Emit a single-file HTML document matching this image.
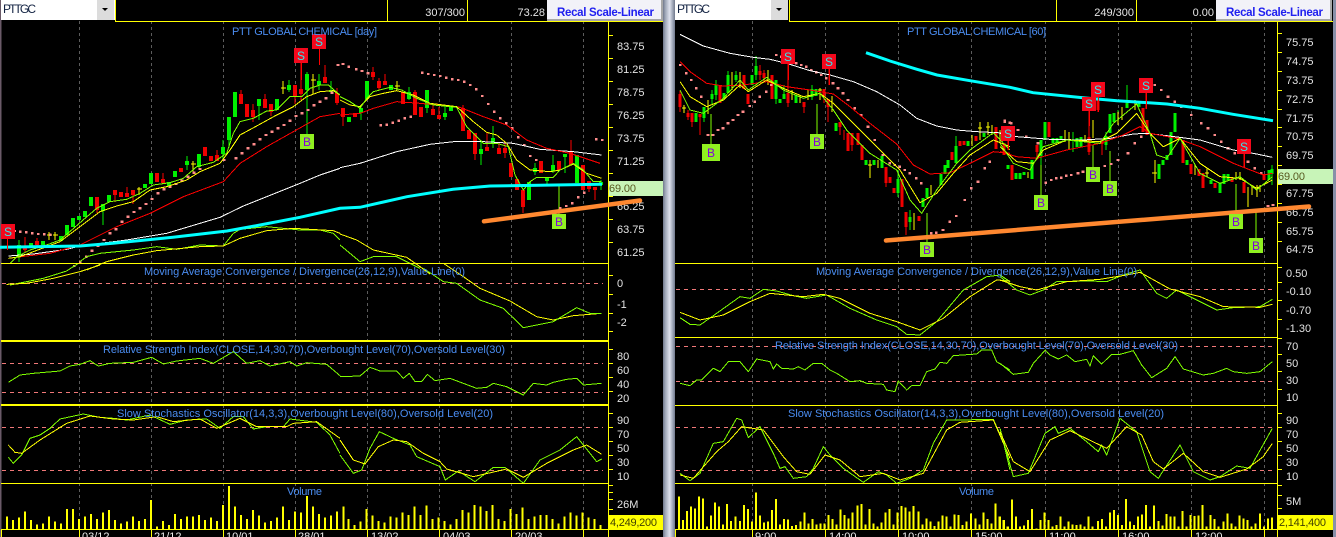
<!DOCTYPE html>
<html><head><meta charset="utf-8"><title>PTTGC</title>
<style>
html,body{margin:0;padding:0;background:#000;width:1336px;height:537px;overflow:hidden}
svg{display:block}
text{font-family:"Liberation Sans",Arial,sans-serif;font-size:11px}
.ax{fill:#e4e4e4}
.ti{fill:#4a8cf0}
.dt{fill:#eeeeee}
.l{fill:none;stroke-width:3;stroke-linejoin:round}
.g{stroke:#80ff00}.y{stroke:#ffff00}.r{stroke:#ff0000}.w{stroke:#ffffff}
</style></head><body>
<svg xmlns="http://www.w3.org/2000/svg" width="1336" height="537" viewBox="0 0 1336 537">
<defs>
<linearGradient id="sb" x1="0" x2="1" y1="0" y2="0"><stop offset="0" stop-color="#70788c"/><stop offset=".2" stop-color="#a0a8b8"/><stop offset=".55" stop-color="#dfe2ee"/><stop offset=".8" stop-color="#a0a8b8"/><stop offset="1" stop-color="#70788c"/></linearGradient>
</defs>
<rect width="1336" height="537" fill="#000"/>
<rect x="0" y="0" width="1.5" height="537" fill="#6a5a68"/>
<rect x="663" y="0" width="12" height="537" fill="url(#sb)"/>
<rect x="1333" y="0" width="3" height="537" fill="#8890a8"/>

<!-- grid -->
<path d="M79.5 21V529M151.5 21V529M223.5 21V529M295.5 21V529M367.5 21V529M439.5 21V529M511.5 21V529M583.5 21V529M752.5 21V529M825.5 21V529M898.5 21V529M971.5 21V529M1045.5 21V529M1118.5 21V529M1191.5 21V529M1264.5 21V529" stroke="#5c5c5c" stroke-dasharray="3 3" fill="none"/>
<path d="M2 283.5H603M2 363.5H603M2 392.5H603M2 427.5H603M2 470.5H603M676 289.5H1273M676 346.5H1273M676 381.5H1273M676 427.5H1273M676 470.5H1273" stroke="#f07878" stroke-dasharray="4 4" fill="none"/>

<!-- candles left -->
<g shape-rendering="crispEdges" fill="none">
<path stroke="#00f000" d="M19 240V262M103 204V225M187 156V170M199 154V170M223 140V160M229 140V148M259 99V120M289 80V92M307 72V134M319 74V90M331 81V93M361 113V120M409 87V100M427 108V113M445 105V120M481 140V165M493 126V148M535 163V175M553 155V173M565 157V173M601 180V190M547 181V185"/>
<path stroke="#80ff00" d="M559 185V214"/>
<path stroke="#ff0000" d="M25 237V252M37 238V247M97 210V213M115 195V202M127 187V193M133 195V204M163 173V183M217 150V155M241 90V94M253 104V122M265 94V99M271 112V116M301 63V100M295 96V104M325 65V83M337 88V105M343 117V126M373 67V80M379 78V90M385 74V81M415 90V92M433 105V109M439 107V115M463 105V108M475 154V160M487 133V147M499 142V148M505 142V158M523 207V213M571 140V152M589 189V192M595 190V200"/>
<path stroke="#ffff00" d="M49 232V240M47 235H52M55 232V240M53 235H58M139 187V195M137 189H142M193 161V173M191 164H196M283 81V94M281 88H286M313 74V94M311 80H316M397 81V90M395 86H400"/>
<path stroke="#00f000" stroke-width="4" d="M19 245V257M31 243V247M43 241V245M61 236V241M67 225V235M73 218V227M79 216V220M85 211V217M91 197V206M103 204V211M109 195V202M145 184V188M151 173V184M169 182V186M175 171V177M187 161V165M199 154V167M223 147V154M229 117V140M235 92V117M259 99V106M277 99V110M289 85V90M307 74V90M319 81V85M331 90V92M349 117V122M361 108V113M367 81V99M391 85V90M409 92V99M427 90V108M445 113V117M451 107V111M481 149V154M493 138V143M529 182V200M535 168V172M547 177V181M553 165V171M565 154V157M577 155V183M601 182V185"/>
<path stroke="#f00000" stroke-width="4" d="M25 247V250M37 241V245M97 197V210M115 190V195M121 192V197M127 193V197M133 190V195M157 173V182M163 179V183M181 168V172M205 147V156M211 156V161M217 155V161M241 94V104M247 104V117M253 110V117M265 99V108M271 104V112M295 85V96M301 89V94M325 77V83M337 93V103M343 108V117M355 113V117M373 72V77M379 81V88M385 81V85M403 92V104M415 92V115M421 107V117M433 109V115M439 115V119M463 108V131M469 130V139M475 133V154M487 147V151M499 148V154M505 148V153M511 163V177M517 179V190M523 190V207M541 161V173M559 161V170M571 152V165M583 165V190M589 181V189M595 187V190"/>
</g>

<!-- candles right -->
<g shape-rendering="crispEdges" fill="none">
<path stroke="#00f000" d="M704 107V122M712 90V105M716 80V100M728 71V93M736 71V82M756 56V80M776 80V104M784 85V99M812 85V100M898 170V197M910 210V230M956 136V163M1127 85V108M1272 165V185M1041 140V165M1073 132V152M1106 132V150M1118 110V125"/>
<path stroke="#80ff00" d="M711 114V144M817 104V134M927 213V242M1093 145V167M1110 151V181M1041 165V195M1236 184V214M1256 212V238"/>
<path stroke="#ff0000" d="M680 91V112M688 110V120M692 122V127M700 117V135M760 65V80M764 70V82M788 64V107M804 107V113M824 97V103M829 69V85M828 107V122M840 127V135M844 130V140M852 145V151M886 183V187M906 227V235M1008 141V150M1089 111V155M1098 97V112M1102 144V155M1146 93V109M1244 154V168M1037 152V160"/>
<path stroke="#ffff00" d="M684 105V113M682 108H686M708 100V114M732 72V90M740 72V88M768 70V85M792 90V100M800 95V103M808 90V100M820 88V100M818 90H822M832 96V112M870 160V178M868 165H872M878 160V168M914 213V230M931 185V195M972 135V146M980 122V140M978 128H982M988 122V135M986 127H990M992 125V135M1000 130V142M1028 172V178M1065 130V142M1069 132V150M1085 135V142M1093 120V138M1118 112V125M1122 107V120M1135 100V110M1155 160V183M1152 173H1157M1195 165V175M1207 168V177M1205 173H1209M1236 172V180M1240 172V180M1248 187V207M1252 185V195M1257 185V197M1260 185V192"/>
<path stroke="#00f000" stroke-width="3" d="M696 113V122M704 107V118M712 94V99M716 85V95M724 93V99M728 75V93M736 75V80M752 75V85M756 66V75M776 80V99M780 99V103M784 94V99M796 95V103M812 89V97M816 89V96M836 123V131M866 160V165M874 160V165M882 156V168M898 179V193M910 217V222M923 198V207M927 188V198M941 174V185M945 165V174M948 160V168M956 146V163M968 141V146M984 133V137M1008 165V169M1016 173V179M1020 173V179M1024 172V175M1032 160V179M1041 140V156M1045 122V140M1053 138V143M1057 138V143M1061 136V140M1077 138V147M1081 137V147M1106 136V145M1110 114V133M1114 113V122M1127 103V108M1139 103V107M1159 164V179M1163 160V165M1167 155V160M1171 132V155M1175 113V132M1187 160V165M1211 180V184M1220 183V193M1224 174V184M1228 174V180M1269 170V180M1272 169V174"/>
<path stroke="#f00000" stroke-width="3" d="M680 94V107M688 113V117M692 113V122M700 114V117M720 85V103M744 75V89M748 94V104M760 71V75M764 73V78M772 75V99M788 93V103M804 102V107M824 89V97M828 99V107M840 122V127M848 133V151M852 133V145M858 133V145M862 145V160M886 167V183M890 177V183M894 188V193M902 179V207M906 212V227M919 216V221M952 152V160M960 141V146M964 141V145M976 136V141M996 127V149M1004 143V155M1012 165V180M1037 145V152M1049 122V137M1089 137V152M1098 98V110M1102 140V144M1143 108V132M1147 120V135M1179 137V140M1183 140V163M1191 164V174M1199 169V176M1203 173V188M1215 183V188M1232 177V182M1244 182V193M1264 174V180"/>
</g>

<!-- SAR dots -->
<g fill="none" stroke="#ff8c8c" shape-rendering="crispEdges" transform="scale(.33333)" >
<path stroke-width="7" d="M40 693h8M57 695h8M75 697h8M93 700h8M111 702h8M129 703h8M147 704h8M219 798h8M237 785h8M255 770h8M272 752h8M290 738h8M308 720h8M326 700h8M344 688h8M362 665h8M380 650h8M398 636h8M416 625h8M434 612h8M452 597h8M470 580h8M488 568h8M506 560h8M524 552h8M542 542h8M560 530h8M578 518h8M596 507h8M668 480h8M704 475h8M722 460h8M740 445h8M758 433h8M776 418h8M794 405h8M812 395h8M830 385h8M848 375h8M866 362h8M884 348h8M902 340h8M920 330h8M938 316h8M956 305h8M974 295h8M992 278h8M1010 195h8"/>
<path stroke-width="7" transform="translate(1020,0)" d="M5 192h8M22 200h8M45 208h8M62 213h8M80 220h8M118 376h8M136 374h8M154 368h8M172 362h8M190 355h8M208 350h8M243 218h8M261 222h8M279 225h8M297 228h8M315 233h8M333 238h8M351 240h8M369 245h8M387 255h8M405 268h8M423 288h8M441 312h8M459 335h8M477 355h8M495 370h8M513 385h8M531 412h8M549 435h8M567 468h8M585 480h8M657 625h8M675 618h8M693 610h8M711 592h8M729 578h8M765 418h8M783 420h8"/>
<path stroke-width="7" transform="translate(2010,0)" d="M27 195h8M45 220h8M60 240h8M75 265h8M90 290h8M110 405h8M125 405h8M140 390h8M155 385h8M170 370h8M185 360h8M200 345h8M215 335h8M235 318h8M250 305h8M265 290h8M285 275h8M300 255h8M315 165h8M330 170h8M345 175h8M375 190h8M390 195h8M405 200h8M420 210h8M435 217h8M450 225h8M465 235h8M485 250h8M500 265h8M515 280h8M530 300h8M550 325h8M570 345h8M590 380h8M610 420h8M635 465h8M655 490h8M670 495h8M685 500h8M700 510h8M715 520h8M735 535h8M750 550h8M780 700h8M795 698h8M815 690h8M835 665h8M855 648h8M880 600h8M900 565h8M920 545h8M940 505h8M955 485h8M1000 365h8M1015 368h8"/>
<path stroke-width="7" transform="translate(3000,0)" d="M10 362h8M30 370h8M50 390h8M75 410h8M110 430h8M133 548h8M150 540h8M165 535h8M180 533h8M195 527h8M210 525h8M230 520h8M245 515h8M290 505h8M310 498h8M330 492h8M350 480h8M380 460h8M400 430h8M420 410h8M460 255h8M480 270h8M500 290h8M520 305h8M540 320h8M570 345h8M600 370h8M620 385h8M640 405h8M660 425h8M680 445h8M700 460h8M740 485h8M760 505h8M780 520h8M800 618h8M815 615h8"/>
</g>

<!-- MA lines -->
<g transform="scale(.33333)" shape-rendering="crispEdges">
<polyline class="l w" points="25,768 100,762 200,748 240,738 380,720 500,700 660,652 730,618 800,590 900,550 960,525 1020,505"/>
<polyline class="l r" points="25,775 80,768 150,760 240,735 350,680 450,640 550,590 670,545 720,490 800,440 880,395 960,350 1020,340"/>
<polyline class="l y" points="25,775 60,770 100,755 180,725 240,680 300,635 350,618 400,605 450,570 500,560 560,540 600,515 660,490 690,450 720,405 770,378 830,345 880,320 920,290 960,275 1000,272 1020,285"/>
<polyline class="l g" points="30,790 50,770 90,750 140,735 180,720 215,690 255,655 290,625 330,605 380,598 420,580 460,555 510,548 550,535 590,500 640,487 680,460 700,400 720,365 760,355 800,333 830,330 870,290 905,290 930,265 960,255 985,255 1020,285"/>
<polyline class="l g" points="240,785 260,770 300,760 400,750 470,740 530,748 600,735 670,738 700,700 720,688 800,680 900,690 960,690 1000,700 1020,720"/>
<polyline class="l y" points="260,810 320,785 400,765 470,752 600,740 670,738 720,715 800,692 880,685 1000,692 1020,700"/>
</g>
<g transform="translate(340,0) scale(.33333)" shape-rendering="crispEdges">
<polyline class="l w" points="0,503 60,490 170,455 270,433 350,424 430,425 520,430 600,448 700,455 785,465"/>
<polyline class="l r" points="0,345 60,340 100,325 170,305 240,310 360,322 430,350 500,375 560,420 620,445 690,460 780,490"/>
<polyline class="l y" points="0,300 30,315 60,320 90,290 130,280 170,272 220,285 270,310 350,320 400,365 440,397 470,405 500,430 530,480 570,510 630,515 660,510 700,492 740,520 785,535"/>
<polyline class="l g" points="0,290 30,305 60,325 80,295 100,275 150,262 185,270 230,295 280,315 350,322 380,380 430,430 470,430 505,440 525,525 550,570 570,545 590,532 640,532 660,510 700,490 730,510 760,545 785,545"/>
<polyline class="l y" points="0,702 50,720 100,750 200,772 240,800 270,822"/>
<polyline class="l g" points="0,735 60,785 100,770 170,770 210,790 240,805"/>
</g>
<g transform="translate(670,0) scale(.33333)" shape-rendering="crispEdges">
<polyline class="l w" points="30,103 100,138 180,160 250,172 300,178 350,190 420,212 480,225 550,245 620,275 690,315 740,355 800,378 860,390 920,395 1020,400"/>
<polyline class="l r" points="30,185 60,215 110,250 160,258 220,255 290,245 350,260 420,270 490,282 540,320 600,370 680,432 730,495 780,522 840,518 900,490 970,455 1020,460"/>
<polyline class="l y" points="30,245 60,290 110,320 160,300 210,255 235,275 290,240 340,265 400,290 450,280 490,310 550,370 620,440 690,510 750,608 800,580 850,520 900,465 970,420 1020,440"/>
<polyline class="l g" points="30,270 60,330 100,340 160,295 210,240 235,270 290,232 340,270 400,295 450,280 490,330 530,390 600,460 680,510 720,600 755,640 800,570 860,490 900,450 970,398 1020,450"/>
</g>
<g transform="translate(1000,0) scale(.33333)" shape-rendering="crispEdges">
<polyline class="l w" points="0,400 50,410 150,418 250,420 330,415 400,402 440,400 500,407 600,420 700,450 770,462 817,472"/>
<polyline class="l r" points="0,455 50,470 110,475 200,450 300,430 370,405 420,380 450,400 530,415 600,440 700,490 790,525 817,520"/>
<polyline class="l y" points="0,440 50,485 100,490 130,450 200,420 300,425 350,400 410,340 450,400 490,440 540,415 600,490 660,530 720,535 770,565 817,540"/>
<polyline class="l g" points="0,430 40,490 90,510 130,440 200,420 300,430 340,370 410,312 450,400 470,465 500,475 540,415 600,520 660,550 720,530 770,570 817,530"/>
</g>

<!-- cyan MAs -->
<polyline fill="none" stroke="#00ffff" stroke-width="3" points="0,247.3 80,246 113,243.3 173,237.3 227,231 260,225 300,217.3 340,208.3 360,207.3 407,196.7 453,189.3 490,186 602,184.3"/>
<polyline fill="none" stroke="#00ffff" stroke-width="3" points="866,52.7 890,61 917,69.3 937,75 970,80.7 1010,87.3 1033,92.7 1083,97.7 1117,100.7 1167,104 1200,108.3 1233,114.3 1273,120.7"/>

<!-- indicator lines -->
<g transform="translate(0,265) scale(.33333)" shape-rendering="crispEdges">
<polyline class="l g" points="30,60 80,50 130,40 200,18 235,-5"/>
<polyline class="l y" points="20,58 80,55 160,40 240,20 300,0"/>
<polyline class="l g" points="25,352 60,330 100,325 180,318 210,303 240,298 270,287 295,303 330,295 400,292 455,277 490,297 530,288 600,280 640,295 700,260 740,295 780,287 810,303 870,290 890,303 920,293 980,298 1020,332"/>
<polyline class="l g" points="25,577 40,595 65,570 90,520 120,510 150,490 180,462 250,447 300,457 340,460 380,465 450,450 510,478 560,465 620,462 660,490 700,455 730,455 760,492 800,485 850,485 870,462 950,472 990,510 1020,565"/>
<polyline class="l y" points="25,540 45,562 65,565 120,525 200,475 270,453 340,462 400,465 470,455 520,470 600,462 650,490 720,460 770,485 860,485 880,475 950,470 1020,520"/>
<path stroke="#ffff00" stroke-width="6" fill="none" d="M21 755V793M39 765V793M57 758V793M75 740V793M93 765V793M111 778V793M129 775V793M147 755V793M165 770V793M183 775V793M201 732V793M219 732V793M237 762V793M255 755V793M273 747V793M291 762V793M309 743V793M327 735V793M345 765V793M363 775V793M381 770V793M399 755V793M417 768V793M435 762V793M453 705V793M471 785V793M489 768V793M507 780V793M525 747V793M543 762V793M561 755V793M579 755V793M597 750V793M615 765V793M633 758V793M651 768V793M669 720V793M687 663V793M705 725V793M723 750V793M741 762V793M759 735V793M777 752V793M795 773V793M813 768V793M831 758V793M849 725V793M867 765V793M885 740V793M903 743V793M921 693V793M939 725V793M957 747V793M975 758V793M993 752V793M1011 740V793"/>
</g>
<g transform="translate(340,265) scale(.33333)" shape-rendering="crispEdges">
<polyline class="l y" points="310,-5 370,35 420,70 510,108 590,155 640,165 700,152 785,145"/>
<polyline class="l g" points="250,10 310,50 350,55 420,105 490,130 550,188 600,178 640,170 710,128 750,145 785,145"/>
<polyline class="l g" points="0,335 60,333 90,307 120,318 170,318 190,340 208,325 225,350 245,350 262,328 285,347 330,340 370,355 410,370 440,367 460,355 500,365 550,390 580,355 620,360 640,352 680,343 710,340 730,360 785,355"/>
<polyline class="l g" points="0,570 40,625 65,615 90,550 118,500 160,520 210,540 230,575 300,605 316,645 355,618 405,650 460,607 495,607 550,655 600,585 660,555 710,515 770,590 785,582"/>
<polyline class="l y" points="0,525 40,585 75,597 115,545 160,525 200,530 250,565 300,590 320,612 400,635 500,612 550,637 620,595 700,555 740,540 785,568"/>
<path stroke="#ffff00" stroke-width="6" fill="none" d="M10 725V793M26 762V793M44 780V793M62 770V793M80 732V793M98 752V793M116 768V793M134 772V793M152 755V793M170 758V793M188 743V793M206 750V793M224 725V793M242 750V793M260 722V793M278 762V793M296 758V793M314 768V793M332 778V793M350 762V793M368 735V793M386 743V793M404 720V793M422 725V793M440 738V793M458 720V793M476 762V793M494 768V793M512 732V793M530 747V793M548 728V793M566 762V793M584 755V793M602 750V793M620 750V793M638 762V793M656 775V793M674 755V793M692 742V793M710 752V793M728 743V793M746 758V793M764 762V793M782 780V793"/>
</g>
<g transform="translate(670,265) scale(.33333)" shape-rendering="crispEdges">
<polyline class="l g" points="30,158 60,178 90,180 140,145 210,95 240,100 280,73 320,78 370,92 410,100 470,90 540,130 620,165 680,185 710,208 750,210 800,170 880,75 950,35 990,30 1020,50"/>
<polyline class="l y" points="30,142 90,165 160,150 240,110 300,85 400,95 460,88 510,100 600,145 680,170 750,195 820,160 900,95 980,45 1020,48"/>
<polyline class="l g" points="30,355 60,362 80,345 95,345 130,310 150,320 175,290 210,290 235,320 260,282 300,290 310,312 320,297 335,310 370,312 385,305 405,315 430,295 455,295 480,315 500,325 540,350 570,347 590,355 640,358 650,375 675,380 685,348 710,375 725,362 750,362 770,320 795,312 810,292 830,295 850,272 920,267 935,255 965,255 980,290 1020,315"/>
<polyline class="l g" points="30,625 60,647 90,625 130,535 160,530 200,460 215,465 235,518 270,485 310,565 330,610 345,605 370,640 410,635 430,610 460,545 480,570 520,610 580,652 625,620 650,630 680,655 720,640 760,615 790,535 830,465 870,465 970,463 1000,530 1020,615"/>
<polyline class="l y" points="30,630 70,640 140,560 175,530 215,485 280,495 340,575 380,620 420,628 465,570 510,585 570,635 640,625 690,645 760,625 830,495 870,472 970,465 1020,580"/>
<path stroke="#ffff00" stroke-width="6" fill="none" d="M27 695V793M39 765V793M51 738V793M63 725V793M75 730V793M87 695V793M99 700V793M111 785V793M123 752V793M135 713V793M147 725V793M159 778V793M171 717V793M183 768V793M197 755V793M210 768V793M222 720V793M234 732V793M246 770V793M258 683V793M270 752V793M282 773V793M294 770V793M306 735V793M318 702V793M330 778V793M342 762V793M354 763V793M366 783V793M378 780V793M392 770V793M404 743V793M416 775V793M428 762V793M440 778V793M452 775V793M464 775V793M476 750V793M488 762V793M500 778V793M512 733V793M524 750V793M536 760V793M548 743V793M562 722V793M575 717V793M587 778V793M599 732V793M611 775V793M623 785V793M635 773V793M647 742V793M659 732V793M671 778V793M683 743V793M695 723V793M707 728V793M719 740V793M731 723V793M745 740V793M757 778V793M769 760V793M781 770V793M793 783V793M805 770V793M817 752V793M829 755V793M841 785V793M853 748V793M865 750V793M877 780V793M889 770V793M903 745V793M917 760V793M929 778V793M941 742V793M953 762V793M965 775V793M977 715V793M989 755V793M1001 765V793M1013 785V793"/>
</g>
<g transform="translate(1000,265) scale(.33333)" shape-rendering="crispEdges">
<polyline class="l g" points="0,35 50,75 90,90 130,75 170,50 270,48 320,50 370,30 420,15 470,85 500,100 530,75 650,135 700,128 780,125 817,103"/>
<polyline class="l y" points="0,45 60,65 110,75 200,50 300,43 380,30 420,22 510,72 600,95 670,125 780,127 817,118"/>
<polyline class="l g" points="0,295 40,328 85,322 100,295 136,255 150,270 175,282 200,270 225,290 260,283 270,303 280,272 305,297 335,268 360,268 400,257 425,300 455,338 500,310 525,275 550,312 610,330 640,325 680,310 700,320 740,325 780,320 817,290"/>
<polyline class="l g" points="0,490 40,635 85,625 135,505 165,485 175,505 210,490 260,530 295,560 305,540 320,570 360,460 410,500 450,620 475,640 540,540 580,620 630,645 660,635 710,603 750,610 775,565 817,490"/>
<polyline class="l y" points="0,500 40,590 90,620 150,525 210,497 320,550 380,485 425,510 460,590 490,612 550,565 610,620 660,637 740,612 790,575 817,535"/>
<path stroke="#ffff00" stroke-width="6" fill="none" d="M0 755V793M12 765V793M24 785V793M36 703V793M48 755V793M60 785V793M72 782V793M84 765V793M96 732V793M110 790V793M122 765V793M134 742V793M146 765V793M158 785V793M170 780V793M182 755V793M194 785V793M206 770V793M218 778V793M230 780V793M242 778V793M254 785V793M266 755V793M278 785V793M294 768V793M306 762V793M318 785V793M330 742V793M342 735V793M354 750V793M366 780V793M378 702V793M390 770V793M402 780V793M414 755V793M426 748V793M438 720V793M450 785V793M462 722V793M476 768V793M488 782V793M500 747V793M512 755V793M524 755V793M536 785V793M548 738V793M560 785V793M572 750V793M584 753V793M596 752V793M608 720V793M620 785V793M632 750V793M644 762V793M656 785V793M670 770V793M682 745V793M694 775V793M706 785V793M718 752V793M730 760V793M742 765V793M754 785V793M766 775V793M780 745V793M792 785V793M804 760V793M816 757V793"/>
</g>

<!-- yellow frame lines -->
<g fill="#ffff00" shape-rendering="crispEdges">
<rect x="1" y="263" width="608" height="1"/><rect x="1" y="340" width="608" height="2"/><rect x="1" y="404" width="608" height="2"/><rect x="1" y="483" width="608" height="1"/><rect x="1" y="529" width="608" height="1"/>
<rect x="675" y="263" width="603" height="1"/><rect x="675" y="337" width="603" height="1"/><rect x="675" y="405" width="603" height="1"/><rect x="675" y="483" width="603" height="1"/><rect x="675" y="529" width="603" height="1"/>
<rect x="608" y="21" width="1" height="516"/><rect x="1277" y="21" width="1" height="516"/>
<rect x="115" y="0" width="1" height="21"/><rect x="115" y="21" width="548" height="1"/><rect x="387" y="0" width="1" height="21"/><rect x="467" y="0" width="1" height="21"/>
<rect x="789" y="0" width="1" height="21"/><rect x="789" y="21" width="544" height="1"/><rect x="1056" y="0" width="1" height="21"/><rect x="1136" y="0" width="1" height="21"/>
<rect x="1" y="529" width="1" height="8"/><rect x="79" y="529" width="1" height="8"/><rect x="151" y="529" width="1" height="8"/><rect x="223" y="529" width="1" height="8"/><rect x="295" y="529" width="1" height="8"/><rect x="367" y="529" width="1" height="8"/><rect x="439" y="529" width="1" height="8"/><rect x="511" y="529" width="1" height="8"/><rect x="583" y="529" width="1" height="8"/>
<rect x="675" y="529" width="1" height="8"/><rect x="752" y="529" width="1" height="8"/><rect x="825" y="529" width="1" height="8"/><rect x="898" y="529" width="1" height="8"/><rect x="971" y="529" width="1" height="8"/><rect x="1045" y="529" width="1" height="8"/><rect x="1118" y="529" width="1" height="8"/><rect x="1191" y="529" width="1" height="8"/><rect x="1264" y="529" width="1" height="8"/>
</g>
<path stroke="#ffff00" fill="none" shape-rendering="crispEdges" d="M608 35.5h5M608 58.5h5M608 81.5h5M608 104.5h5M608 127.5h5M608 150.5h5M608 173.5h5M608 196.5h5M608 219.5h5M608 242.5h5M608 275.5h5M608 294.5h5M608 313.5h5M608 331.5h5M608 349.5h5M608 363.5h5M608 377.5h5M608 391.5h5M608 413.5h5M608 427.5h5M608 441.5h5M608 455.5h5M608 469.5h5M608 485.5h5M608 492.5h5M608 499.5h5M608 509.5h5M1277 33.5h5M1277 52.5h5M1277 71.5h5M1277 90.5h5M1277 109.5h5M1277 127.5h5M1277 146.5h5M1277 165.5h5M1277 184.5h5M1277 203.5h5M1277 222.5h5M1277 241.5h5M1277 267.5h5M1277 282.5h5M1277 300.5h5M1277 319.5h5M1277 338.5h5M1277 354.5h5M1277 371.5h5M1277 389.5h5M1277 413.5h5M1277 427.5h5M1277 441.5h5M1277 455.5h5M1277 469.5h5M1277 485.5h5M1277 495.5h5M1277 508.5h5"/>

<!-- axis labels -->
<g class="ax">
<text class="ax" x="617" y="50">83.75</text><text class="ax" x="617" y="73">81.25</text><text class="ax" x="617" y="96">78.75</text><text class="ax" x="617" y="119">76.25</text><text class="ax" x="617" y="142">73.75</text><text class="ax" x="617" y="165">71.25</text><text class="ax" x="617" y="210">66.25</text><text class="ax" x="617" y="233">63.75</text><text class="ax" x="617" y="256">61.25</text>
<text class="ax" x="617" y="287">0</text><text class="ax" x="617" y="308">-1</text><text class="ax" x="617" y="326">-2</text>
<text class="ax" x="617" y="360">80</text><text class="ax" x="617" y="374">60</text><text class="ax" x="617" y="388">40</text><text class="ax" x="617" y="402">20</text>
<text class="ax" x="617" y="424">90</text><text class="ax" x="617" y="438">70</text><text class="ax" x="617" y="452">50</text><text class="ax" x="617" y="466">30</text><text class="ax" x="617" y="480">10</text><text class="ax" x="617" y="508">26M</text>
<text class="ax" x="1286" y="46">75.75</text><text class="ax" x="1286" y="65">74.75</text><text class="ax" x="1286" y="84">73.75</text><text class="ax" x="1286" y="103">72.75</text><text class="ax" x="1286" y="122">71.75</text><text class="ax" x="1286" y="140">70.75</text><text class="ax" x="1286" y="159">69.75</text><text class="ax" x="1286" y="197">67.75</text><text class="ax" x="1286" y="216">66.75</text><text class="ax" x="1286" y="235">65.75</text><text class="ax" x="1286" y="253">64.75</text>
<text class="ax" x="1286" y="277">0.50</text><text class="ax" x="1286" y="295">-0.10</text><text class="ax" x="1286" y="314">-0.70</text><text class="ax" x="1286" y="332">-1.30</text>
<text class="ax" x="1286" y="350">70</text><text class="ax" x="1286" y="367">50</text><text class="ax" x="1286" y="384">30</text><text class="ax" x="1286" y="401">10</text>
<text class="ax" x="1286" y="424">90</text><text class="ax" x="1286" y="438">70</text><text class="ax" x="1286" y="452">50</text><text class="ax" x="1286" y="466">30</text><text class="ax" x="1286" y="480">10</text><text class="ax" x="1286" y="505">5M</text>
</g>

<!-- orange trend lines -->
<line x1="484" y1="221.3" x2="640" y2="200.5" stroke="#ff8830" stroke-width="4.5" stroke-linecap="round"/>
<line x1="886" y1="240.5" x2="1309" y2="206.5" stroke="#ff8830" stroke-width="4.5" stroke-linecap="round"/>

<!-- price/vol boxes -->
<rect x="609" y="181" width="54" height="15" fill="#c8f4b8"/>
<text x="609" y="192" fill="#585820" textLength="27">69.00</text>
<rect x="1278" y="169" width="55" height="15" fill="#c8f4b8"/>
<text x="1278" y="180" fill="#585820" textLength="27">69.00</text>
<rect x="609" y="515" width="54" height="15" fill="#ffff00"/>
<text x="610" y="526" fill="#404000" textLength="47">4,249,200</text>
<rect x="1278" y="515" width="55" height="15" fill="#ffff00"/>
<text x="1279" y="526" fill="#404000" textLength="47">2,141,400</text>

<!-- S markers -->
<g fill="#f4081c" shape-rendering="crispEdges">
<path stroke="#ff0000" fill="none" d="M7.5 239V250M301.5 63V80M319.5 49V65M788.5 64V80M829.5 69V85M1008.5 141V150M1089.5 111V126M1098.5 97V112M1146.5 93V109M1244.5 154V168"/>
<rect x="1" y="224" width="14" height="15"/><rect x="294" y="48" width="14" height="15"/><rect x="312" y="34" width="14" height="15"/><rect x="781" y="49" width="14" height="15"/><rect x="822" y="54" width="14" height="15"/><rect x="1001" y="126" width="14" height="15"/><rect x="1082" y="97" width="14" height="14"/><rect x="1091" y="82" width="14" height="15"/><rect x="1139" y="78" width="14" height="15"/><rect x="1237" y="139" width="14" height="15"/>
</g>
<g text-anchor="middle">
<text x="8" y="236" fill="#30e8f0" style="font-size:12px">S</text><text x="301" y="60" fill="#30e8f0" style="font-size:12px">S</text><text x="319" y="46" fill="#30e8f0" style="font-size:12px">S</text><text x="788" y="61" fill="#30e8f0" style="font-size:12px">S</text><text x="829" y="66" fill="#30e8f0" style="font-size:12px">S</text><text x="1008" y="138" fill="#30e8f0" style="font-size:12px">S</text><text x="1089" y="108" fill="#30e8f0" style="font-size:12px">S</text><text x="1098" y="94" fill="#30e8f0" style="font-size:12px">S</text><text x="1146" y="90" fill="#30e8f0" style="font-size:12px">S</text><text x="1244" y="151" fill="#30e8f0" style="font-size:12px">S</text>
</g>
<!-- B markers -->
<g fill="#90f020" shape-rendering="crispEdges">
<rect x="300" y="134" width="14" height="15"/><rect x="552" y="214" width="14" height="15"/><rect x="702" y="144" width="18" height="17"/><rect x="810" y="134" width="14" height="15"/><rect x="920" y="242" width="14" height="15"/><rect x="1086" y="167" width="14" height="15"/><rect x="1103" y="181" width="14" height="15"/><rect x="1034" y="195" width="14" height="15"/><rect x="1229" y="214" width="14" height="15"/><rect x="1249" y="238" width="14" height="15"/>
</g>
<g text-anchor="middle">
<text x="307" y="146" fill="#8000e0" style="font-size:12px">B</text><text x="559" y="226" fill="#8000e0" style="font-size:12px">B</text><text x="711" y="157" fill="#8000e0" style="font-size:12px">B</text><text x="817" y="146" fill="#8000e0" style="font-size:12px">B</text><text x="927" y="254" fill="#8000e0" style="font-size:12px">B</text><text x="1093" y="179" fill="#8000e0" style="font-size:12px">B</text><text x="1110" y="193" fill="#8000e0" style="font-size:12px">B</text><text x="1041" y="207" fill="#8000e0" style="font-size:12px">B</text><text x="1236" y="226" fill="#8000e0" style="font-size:12px">B</text><text x="1256" y="250" fill="#8000e0" style="font-size:12px">B</text>
</g>

<!-- titles -->
<text class="ti" x="232" y="35" textLength="145">PTT GLOBAL CHEMICAL [day]</text>
<text class="ti" x="144" y="275" textLength="321">Moving Average Convergence / Divergence(26,12,9),Value Line(0)</text>
<text class="ti" x="103" y="353" textLength="402">Relative Strength Index(CLOSE,14,30,70),Overbought Level(70),Oversold Level(30)</text>
<text class="ti" x="117" y="417" textLength="376">Slow Stochastics Oscillator(14,3,3),Overbought Level(80),Oversold Level(20)</text>
<text class="ti" x="287" y="495" textLength="35">Volume</text>
<text class="ti" x="907" y="35" textLength="139">PTT GLOBAL CHEMICAL [60]</text>
<text class="ti" x="816" y="275" textLength="321">Moving Average Convergence / Divergence(26,12,9),Value Line(0)</text>
<text class="ti" x="775" y="349" textLength="403">Relative Strength Index(CLOSE,14,30,70),Overbought Level(70),Oversold Level(30)</text>
<text class="ti" x="788" y="417" textLength="376">Slow Stochastics Oscillator(14,3,3),Overbought Level(80),Oversold Level(20)</text>
<text class="ti" x="959" y="495" textLength="35">Volume</text>

<!-- dates -->
<g>
<text class="dt" x="82" y="540">03/12</text><text class="dt" x="154" y="540">21/12</text><text class="dt" x="226" y="540">10/01</text><text class="dt" x="298" y="540">28/01</text><text class="dt" x="371" y="540">13/02</text><text class="dt" x="443" y="540">04/03</text><text class="dt" x="515" y="540">20/03</text>
<text class="dt" x="755" y="540">9:00</text><text class="dt" x="829" y="540">14:00</text><text class="dt" x="902" y="540">10:00</text><text class="dt" x="975" y="540">15:00</text><text class="dt" x="1049" y="540">11:00</text><text class="dt" x="1122" y="540">16:00</text><text class="dt" x="1195" y="540">12:00</text>
</g>

<!-- top bars -->
<rect x="1" y="0" width="114" height="20" fill="#fff"/>
<rect x="97" y="0" width="17" height="20" fill="#dcdcdc"/>
<path d="M102 8h6l-3 3z" fill="#000"/>
<text x="3" y="13" fill="#102040" textLength="33" style="font-size:12px">PTTGC</text>
<rect x="675" y="0" width="113" height="20" fill="#fff"/>
<rect x="771" y="0" width="17" height="20" fill="#dcdcdc"/>
<path d="M776 8h6l-3 3z" fill="#000"/>
<text x="677" y="13" fill="#102040" textLength="33" style="font-size:12px">PTTGC</text>
<text class="ax" x="465" y="16" text-anchor="end">307/300</text>
<text class="ax" x="545" y="16" text-anchor="end">73.28</text>
<text class="ax" x="1134" y="16" text-anchor="end">249/300</text>
<text class="ax" x="1214" y="16" text-anchor="end">0.00</text>
<rect x="547" y="0" width="116" height="21" fill="#a8a8a8"/>
<rect x="547" y="0" width="114" height="19" fill="#f2f2f8"/>
<text x="557" y="16" fill="#2020f0" textLength="97" style="font-weight:bold;font-size:11.5px">Recal Scale-Linear</text>
<rect x="1216" y="0" width="116" height="21" fill="#a8a8a8"/>
<rect x="1216" y="0" width="114" height="19" fill="#f2f2f8"/>
<text x="1226" y="16" fill="#2020f0" textLength="97" style="font-weight:bold;font-size:11.5px">Recal Scale-Linear</text>
</svg>
</body></html>
